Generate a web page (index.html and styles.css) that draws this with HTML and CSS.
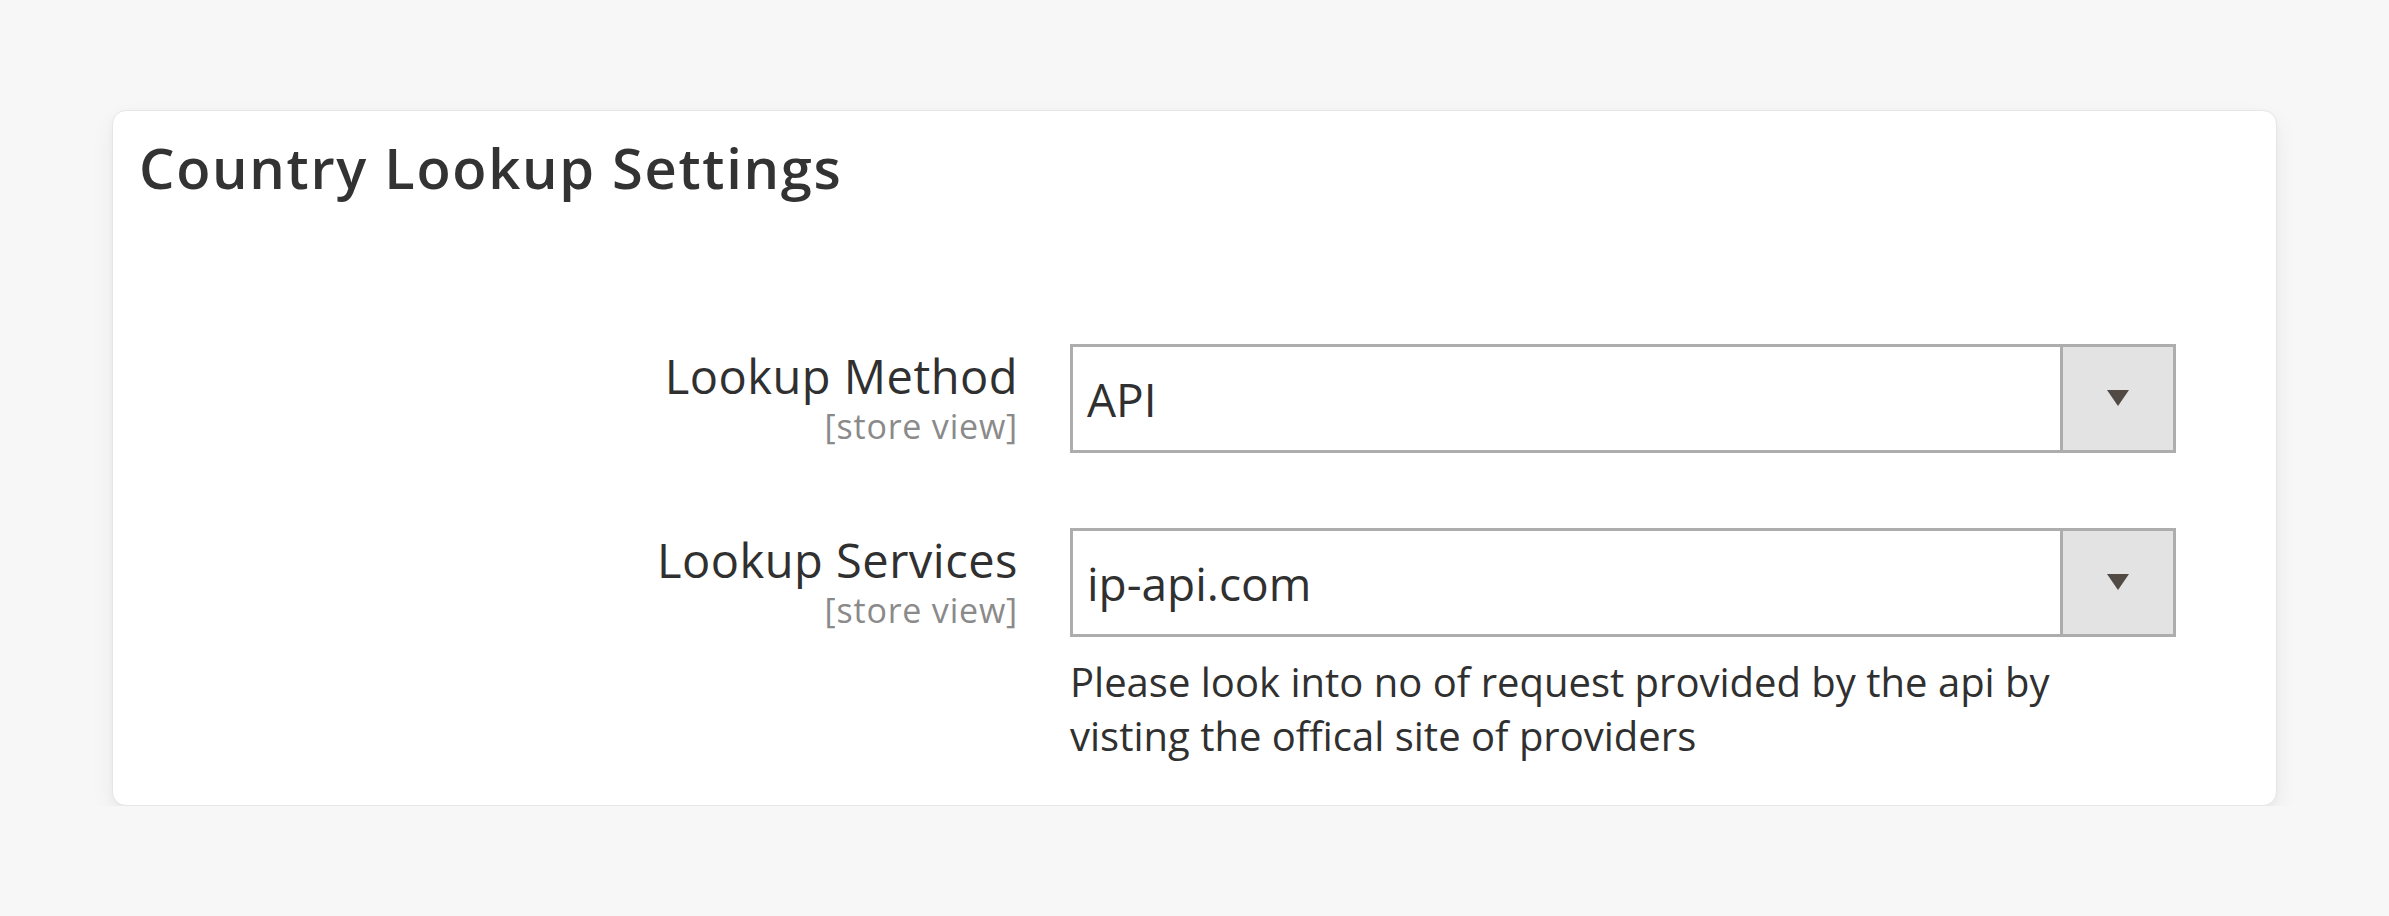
FILE: index.html
```html
<!DOCTYPE html>
<html lang="en">
<head>
<meta charset="utf-8">
<title>Country Lookup Settings</title>
<link rel="stylesheet" href="styles.css">
</head>
<body>
<div class="page">
  <section class="card">
    <h2 class="card-title">Country Lookup Settings</h2>
    <div class="rows">
      <div class="row">
        <div class="label">
          <span class="label-text">Lookup Method</span>
          <span class="scope">[store view]</span>
        </div>
        <div class="control">
          <div class="select">
            <span class="select-value">API</span>
            <span class="select-btn">
              <svg class="arrow" width="24" height="18" viewBox="0 0 24 18"><path d="M1 0 H23 L12 16 Z" fill="#514943"/></svg>
            </span>
          </div>
        </div>
      </div>
      <div class="row">
        <div class="label">
          <span class="label-text">Lookup Services</span>
          <span class="scope">[store view]</span>
        </div>
        <div class="control">
          <div class="select">
            <span class="select-value">ip-api.com</span>
            <span class="select-btn">
              <svg class="arrow" width="24" height="18" viewBox="0 0 24 18"><path d="M1 0 H23 L12 16 Z" fill="#514943"/></svg>
            </span>
          </div>
          <p class="note">Please look into no of request provided by the api by visting the offical site of providers</p>
        </div>
      </div>
    </div>
  </section>
</div>
</body>
</html>
```

FILE: styles.css
```css
html, body {
  margin: 0;
  padding: 0;
  background: #f7f7f7;
}
body {
  font-family: "Open Sans", "Noto Sans", sans-serif;
  color: #303030;
}
.page {
  padding: 110px 112px 0 112px;
}
.card {
  background: #ffffff;
  border: 1px solid #e6e6e6;
  border-radius: 14px;
  box-shadow: 0 10px 24px rgba(0, 0, 0, 0.06), 0 2px 6px rgba(0, 0, 0, 0.03);
  padding: 18px 100px 42px 26px;
}
.card-title {
  margin: 0;
  font-size: 56px;
  font-weight: 600;
  letter-spacing: 1.7px;
  line-height: 76px;
  color: #333333;
}
.rows {
  margin-top: 139px;
  display: flex;
  flex-direction: column;
  gap: 75px;
}
.row {
  display: grid;
  grid-template-columns: 1fr 1106px;
  column-gap: 52px;
}
.label {
  display: flex;
  flex-direction: column;
  align-items: flex-end;
  text-align: right;
}
.label-text {
  font-size: 47px;
  letter-spacing: 0.5px;
  line-height: 64px;
  color: #303030;
}
.scope {
  font-size: 34px;
  letter-spacing: 0.8px;
  line-height: 36px;
  color: #8a8a8a;
}
.control {
  display: flex;
  flex-direction: column;
}
.select {
  display: flex;
  height: 109px;
  box-sizing: border-box;
  border: 3px solid #adadad;
  background: #fff;
}
.select-value {
  flex: 1;
  display: flex;
  align-items: center;
  padding-left: 14px;
  font-size: 46px;
  color: #303030;
}
.select-btn {
  width: 110px;
  border-left: 3px solid #adadad;
  background: #e3e3e3;
  display: flex;
  align-items: center;
  justify-content: center;
}
.arrow {
  display: block;
}
.note {
  margin: 18px 0 0 0;
  font-size: 40px;
  line-height: 54px;
  color: #303030;
}
```
